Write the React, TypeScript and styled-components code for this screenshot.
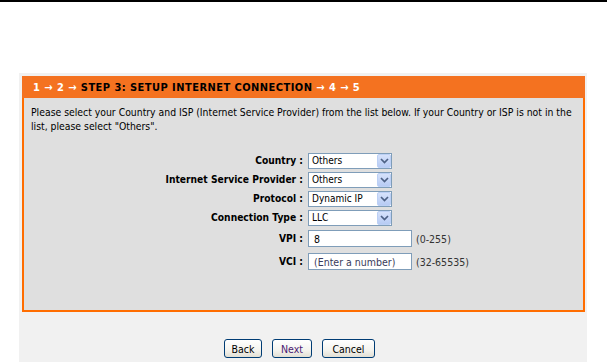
import React from "react";
import styled, { createGlobalStyle } from "styled-components";

const GlobalStyle = createGlobalStyle`
  html, body {
    margin: 0;
    padding: 0;
    background: #ffffff;
  }
  body {
    font-family: "DejaVu Sans Condensed", "DejaVu Sans", sans-serif;
    font-stretch: condensed;
  }
`;

type SelectProps = { value: string };

const FakeSelect = ({ value }: SelectProps) => (
  <SelectBox>
    <span>{value}</span>
    <Arrow>
      <svg width="9" height="6" viewBox="0 0 9 6">
        <path d="M1 1 L4.5 4.5 L8 1" fill="none" stroke="#4d6185" strokeWidth="1.7" />
      </svg>
    </Arrow>
  </SelectBox>
);

const App = () => {
  return (
    <>
      <GlobalStyle />
      <TopRule />
      <Page>
        <Panel>
          <Header>
            <Step>1</Step> <Step>→</Step> <Step>2</Step> <Step>→</Step>{" "}
            <Current>STEP 3: SETUP INTERNET CONNECTION</Current> <Step>→</Step>{" "}
            <Step>4</Step> <Step>→</Step> <Step>5</Step>
          </Header>
          <Body>
            <Intro>
              Please select your Country and ISP (Internet Service Provider) from the list below. If your
              Country or ISP is not in the list, please select "Others".
            </Intro>
            <Form>
              <SelectRow>
                <Label>Country :</Label>
                <FakeSelect value="Others" />
              </SelectRow>
              <SelectRow>
                <Label>Internet Service Provider :</Label>
                <FakeSelect value="Others" />
              </SelectRow>
              <SelectRow>
                <Label>Protocol :</Label>
                <FakeSelect value="Dynamic IP" />
              </SelectRow>
              <SelectRow>
                <Label>Connection Type :</Label>
                <FakeSelect value="LLC" />
              </SelectRow>
              <InputRow>
                <Label>VPI :</Label>
                <Field>
                  <TextBox>8</TextBox>
                  <Hint>(0-255)</Hint>
                </Field>
              </InputRow>
              <InputRow>
                <Label>VCI :</Label>
                <Field>
                  <TextBox $placeholder>(Enter a number)</TextBox>
                  <Hint>(32-65535)</Hint>
                </Field>
              </InputRow>
            </Form>
          </Body>
        </Panel>
        <Buttons>
          <Button $w={38}>Back</Button>
          <Button $w={40} $focus>Next</Button>
          <Button $w={53}>Cancel</Button>
        </Buttons>
      </Page>
    </>
  );
};

export default App;

const TopRule = styled.div`
  height: 2px;
  background: #000000;
`;

const Page = styled.div`
  margin: 71px 0 0 19px;
  width: 563px;
  padding: 3px 2px 20px 3px;
  background: #f1f1f1;
`;

const Panel = styled.div`
  border: 2px solid #ff6d00;
  border-top: none;
  background: #dfdfdf;
`;

const Header = styled.div`
  height: 22px;
  margin: 0 -2px;
  padding-left: 11px;
  background: #f47220;
  font-size: 11px;
  font-weight: bold;
  line-height: 23px;
  letter-spacing: 0.45px;
  white-space: nowrap;
`;

const Step = styled.span`
  color: #ffffff;
`;

const Current = styled.span`
  color: #000000;
`;

const Body = styled.div`
  padding: 7px 7px 37px 7px;
`;

const Intro = styled.p`
  margin: 0;
  font-size: 10.35px;
  line-height: 14px;
  color: #000000;
`;

const Form = styled.div`
  margin-top: 18px;
  display: flex;
  flex-direction: column;
`;

const SelectRow = styled.div`
  display: grid;
  grid-template-columns: 272px auto;
  column-gap: 5px;
  align-items: center;
  height: 19px;
`;

const InputRow = styled(SelectRow)`
  height: 23px;
`;

const Label = styled.div`
  text-align: right;
  font-size: 10.2px;
  font-weight: bold;
  color: #000000;
`;

const SelectBox = styled.div`
  width: 84px;
  height: 16px;
  box-sizing: border-box;
  border: 1px solid #7f9db9;
  background: #ffffff;
  display: flex;
  align-items: center;
  justify-content: space-between;
  padding-left: 3px;
  font-size: 10px;
  color: #000000;
`;

const Arrow = styled.div`
  width: 14px;
  height: 14px;
  box-sizing: border-box;
  border: 1px solid #bcd0f5;
  border-radius: 2px;
  background: linear-gradient(#d6e2fb, #b7cbf4);
  display: flex;
  align-items: center;
  justify-content: center;
`;

const Field = styled.div`
  display: flex;
  align-items: center;
  gap: 4px;
`;

const TextBox = styled.div<{ $placeholder?: boolean }>`
  width: 104px;
  height: 17px;
  box-sizing: border-box;
  border: 1px solid #7f9db9;
  background: #ffffff;
  padding: 0 5px;
  font-size: 10.5px;
  line-height: 16px;
  color: ${(p) => (p.$placeholder ? "#3a3a5a" : "#000000")};
`;

const Hint = styled.span`
  font-size: 10.5px;
  color: #333333;
`;

const Buttons = styled.div`
  margin-top: 27px;
  padding-right: 8px;
  display: flex;
  justify-content: center;
  gap: 10px;
`;

const Button = styled.button<{ $focus?: boolean; $w: number }>`
  width: ${(p) => p.$w}px;
  height: 19px;
  padding: 0;
  border: 1px solid #003c74;
  border-radius: 3px;
  background: linear-gradient(#ffffff, #f4f3ee 60%, #e2dfd4);
  font-family: "DejaVu Sans Condensed", "DejaVu Sans", sans-serif;
  font-stretch: condensed;
  font-size: 10.5px;
  color: ${(p) => (p.$focus ? "#4a1a72" : "#000000")};
`;
